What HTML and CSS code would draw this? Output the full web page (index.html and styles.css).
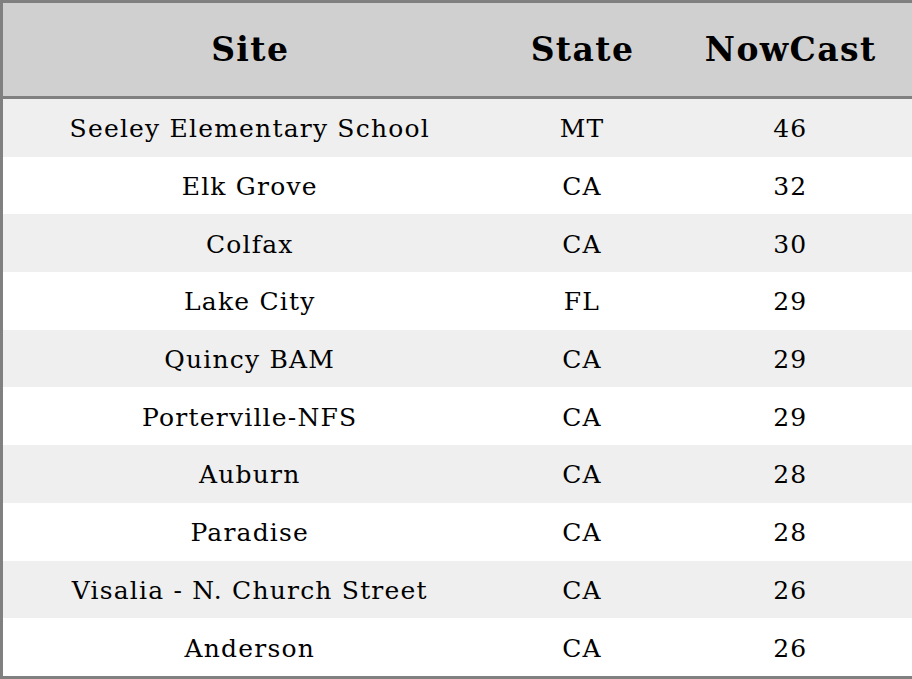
FILE: index.html
```html
<!DOCTYPE html>
<html>
<head>
<meta charset="utf-8">
<link rel="stylesheet" href="styles.css">
</head>
<body>
<table class="grid">
  <colgroup>
    <col class="c-site"><col class="c-state"><col class="c-now">
  </colgroup>
  <thead>
    <tr><th>Site</th><th>State</th><th>NowCast</th></tr>
  </thead>
  <tbody>
    <tr><td>Seeley Elementary School</td><td>MT</td><td>46</td></tr>
    <tr><td>Elk Grove</td><td>CA</td><td>32</td></tr>
    <tr><td>Colfax</td><td>CA</td><td>30</td></tr>
    <tr><td>Lake City</td><td>FL</td><td>29</td></tr>
    <tr><td>Quincy BAM</td><td>CA</td><td>29</td></tr>
    <tr><td>Porterville-NFS</td><td>CA</td><td>29</td></tr>
    <tr><td>Auburn</td><td>CA</td><td>28</td></tr>
    <tr><td>Paradise</td><td>CA</td><td>28</td></tr>
    <tr><td>Visalia - N. Church Street</td><td>CA</td><td>26</td></tr>
    <tr><td>Anderson</td><td>CA</td><td>26</td></tr>
  </tbody>
</table>
</body>
</html>
```
FILE: styles.css
```css
html, body {
  margin: 0;
  padding: 0;
  background: #ffffff;
}
.grid {
  width: 912px;
  height: 679px;
  border-collapse: collapse;
  table-layout: fixed;
  border: 3px solid #808080;
  font-family: "DejaVu Serif", serif;
  color: #000;
}
.c-site { width: 494px; }
.c-state { width: 172px; }
.c-now { width: 246px; }
.grid th {
  background: #d0d0d0;
  font-size: 33px;
  letter-spacing: 1.4px;
  font-weight: bold;
  height: 93px;
  padding: 0 0 0 2px;
  text-align: center;
  border-bottom: 3px solid #808080;
}
.grid td {
  font-size: 25px;
  letter-spacing: 1.2px;
  padding: 2px 0 0 1px;
  text-align: center;
  height: 55px;
}
.grid tbody tr:nth-child(odd) td {
  background: #efefef;
}
```
